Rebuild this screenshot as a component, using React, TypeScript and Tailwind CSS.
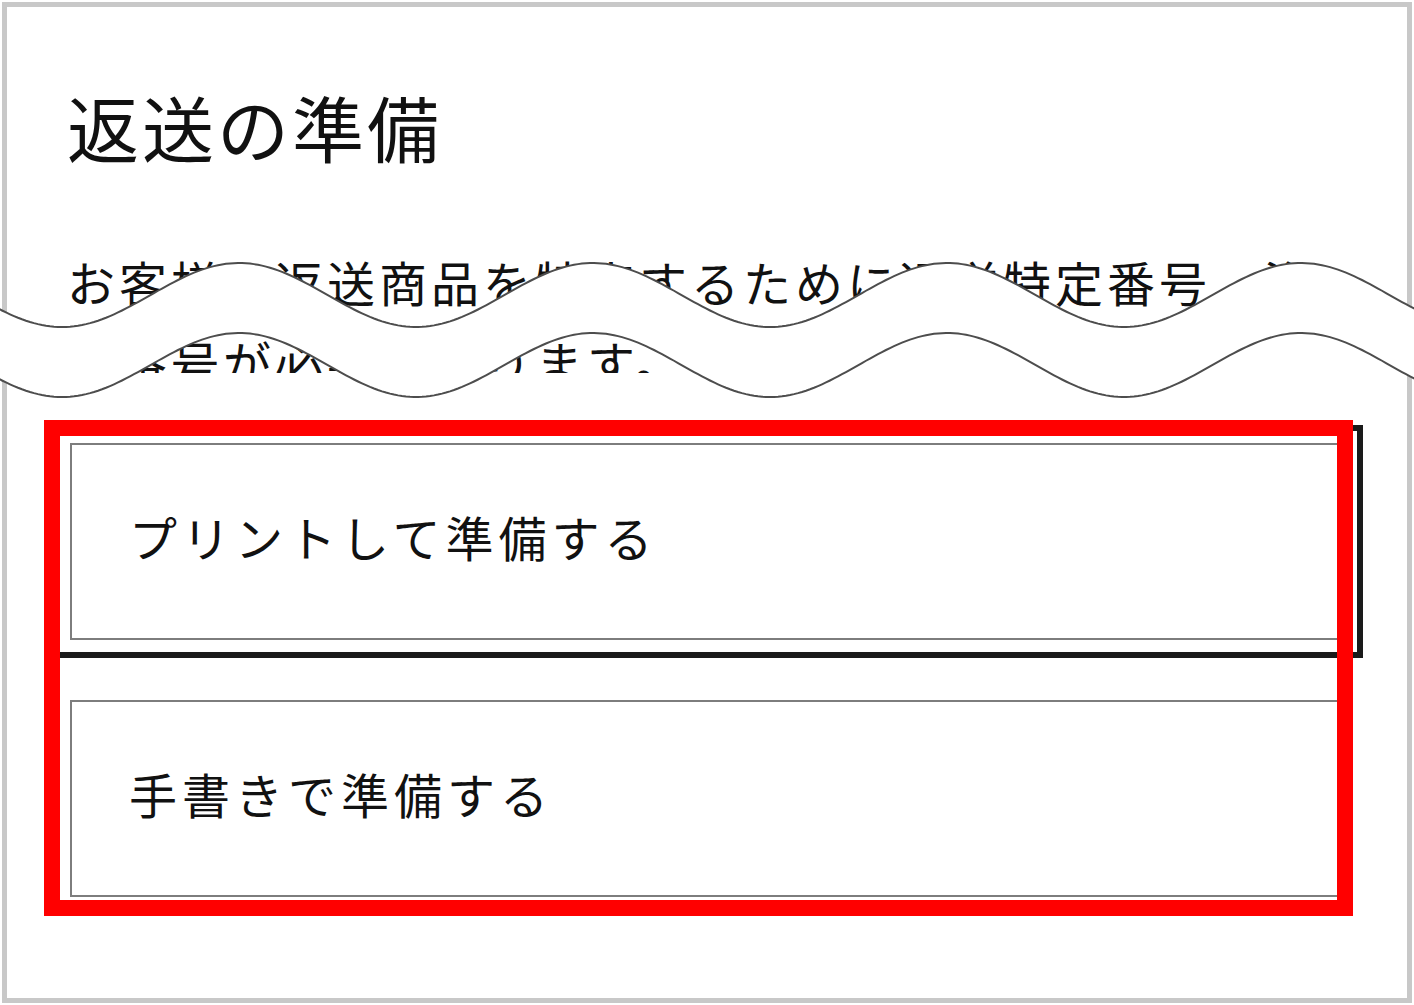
import React from "react";

// wavy "cut" band drawn across the page
const PERIOD = 354;
const CREST = 239;
const MID = 295;
const AMP = 32;
const BAND = 70;

function waveY(x: number) {
  return MID - AMP * Math.cos((2 * Math.PI * (x - CREST)) / PERIOD);
}

function WaveCut() {
  const xs: number[] = [];
  for (let x = -10; x <= 1424; x += 4) xs.push(x);

  const top = xs.map((x) => `${x},${waveY(x).toFixed(2)}`);
  const bottom = xs.map((x) => `${x},${(waveY(x) + BAND).toFixed(2)}`);

  const fill = `M${top.join(" L")} L${[...bottom].reverse().join(" L")} Z`;

  return (
    <svg
      className="pointer-events-none absolute left-0 top-0"
      width={1414}
      height={1005}
      viewBox="0 0 1414 1005"
    >
      <path d={fill} fill="#ffffff" />
      <path d={`M${top.join(" L")}`} fill="none" stroke="#4d4d4d" strokeWidth={2} />
      <path d={`M${bottom.join(" L")}`} fill="none" stroke="#4d4d4d" strokeWidth={2} />
    </svg>
  );
}

export default function App() {
  const options = [
    { label: "プリントして準備する", focused: true },
    { label: "手書きで準備する", focused: false },
  ];

  return (
    <div className="relative h-[1005px] w-[1414px] overflow-hidden bg-white p-[2px] font-['Noto_Sans_CJK_JP','Noto_Sans',sans-serif] text-[#111111]">
      <div className="h-[1001px] w-[1410px] border-[5px] border-[#c8c8c8] pl-[63px] pt-[83px]">
        {/* 見出し */}
        <h1 className="-ml-[3px] text-[72px] font-normal leading-[72px] tracking-[3px]">
          返送の準備
        </h1>

        {/* 説明文（下半分は切り取り） */}
        <div className="-ml-[3px] mt-[79px] h-[132px] overflow-hidden">
          <p className="w-[1270px] text-[48px] leading-[80px] tracking-[4px]">
            お客様の返送商品を特定するために返送特定番号、注文番号が必要になります。
          </p>
        </div>

        {/* 準備方法の選択肢 */}
        <div className="mt-[70px] flex flex-col gap-[60px]">
          {options.map((item, index) => (
            <button
              key={index}
              type="button"
              className={
                item.focused
                  ? "flex h-[197px] w-[1275px] items-center border-2 border-[#7d7d7d] bg-white pb-[12px] pl-[57px] text-left text-[48px] tracking-[5px] text-[#111111] outline-[6px] outline-offset-[12px] outline-[#1a1a1a] outline-solid"
                  : "flex h-[197px] w-[1275px] items-center border-2 border-[#7d7d7d] bg-white pb-[12px] pl-[57px] text-left text-[48px] tracking-[5px] text-[#111111]"
              }
            >
              {item.label}
            </button>
          ))}
        </div>
      </div>

      <WaveCut />

      {/* 赤枠の注記 */}
      <div className="pointer-events-none absolute left-[44px] top-[420px] h-[496px] w-[1309px] border-[16px] border-[#ff0000]" />
    </div>
  );
}
